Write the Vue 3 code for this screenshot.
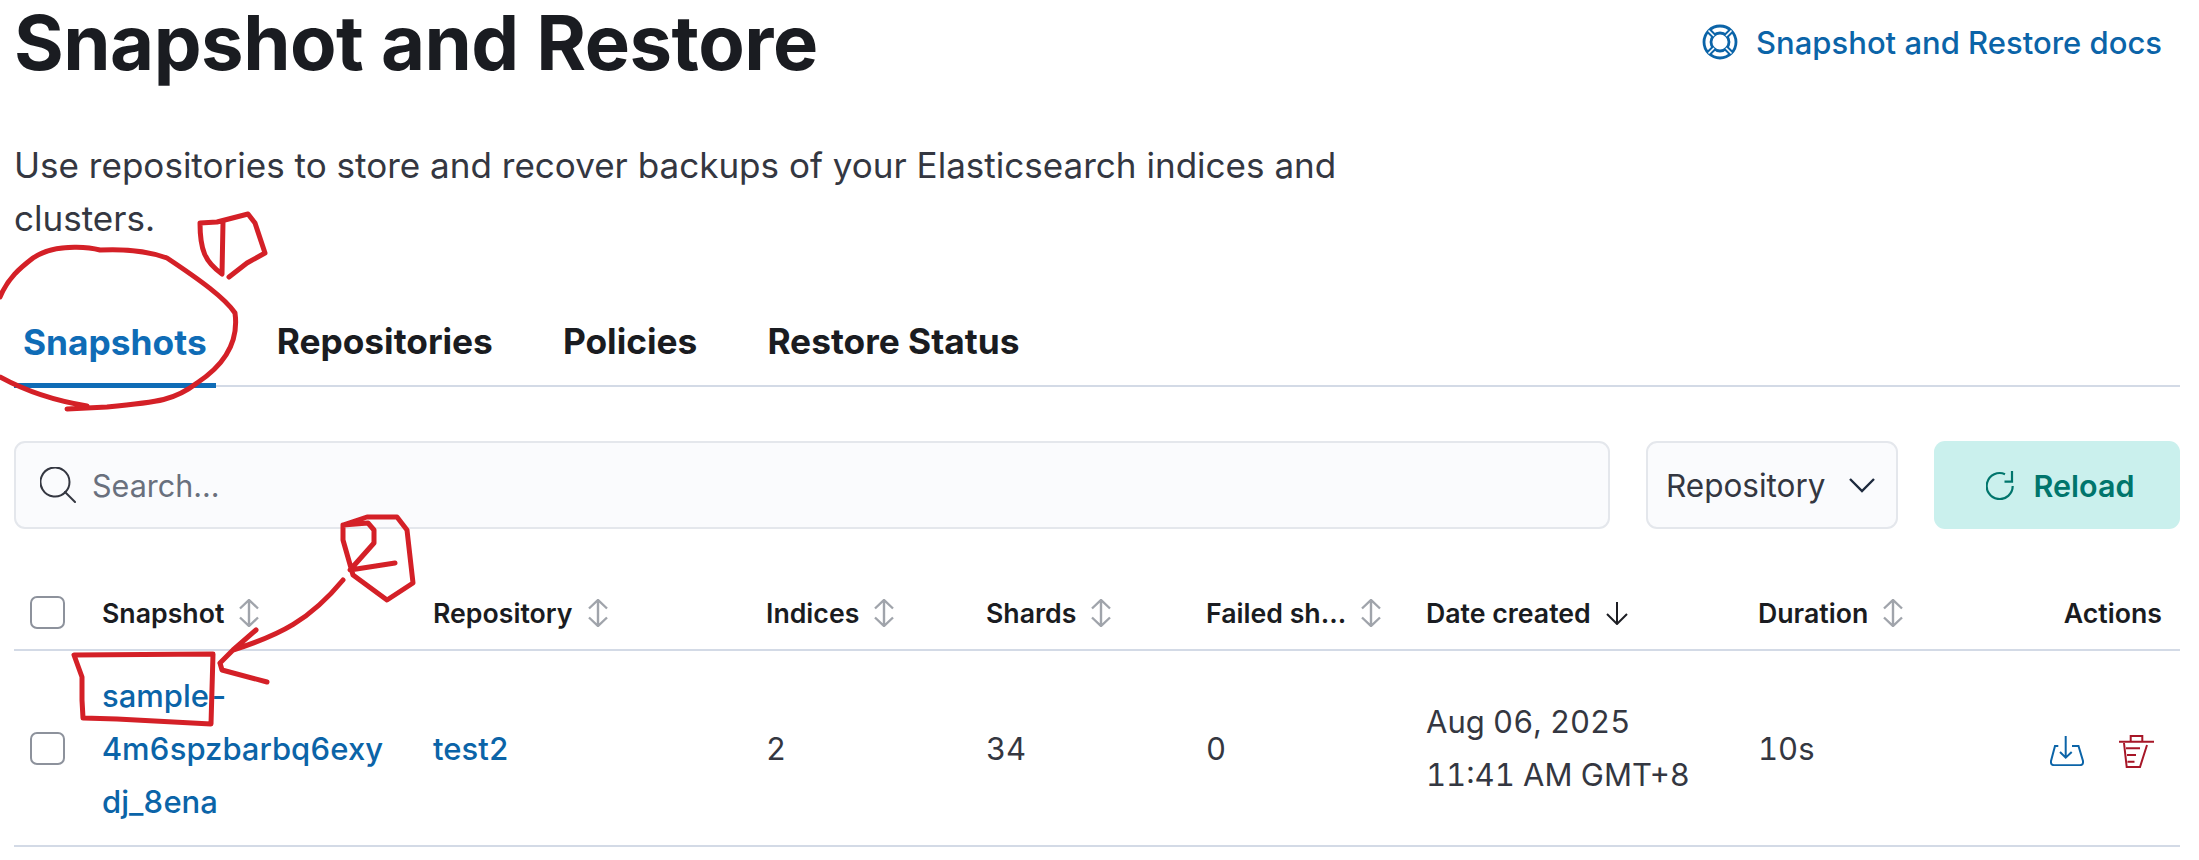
<script setup>
const columns = [
  { label: 'Snapshot', sort: true },
  { label: 'Repository', sort: true },
  { label: 'Indices', sort: true },
  { label: 'Shards', sort: true },
  { label: 'Failed sh...', sort: true },
  { label: 'Date created', sort: false, arrow: true },
  { label: 'Duration', sort: true },
]
</script>

<template>
  <div class="page">
    <header class="head">
      <h1 class="title">Snapshot and Restore</h1>
      <a class="docs">
        <svg class="docs-icon" viewBox="0 0 36 36" fill="none" stroke="currentColor" stroke-width="2.800">
          <circle cx="18" cy="18" r="16" />
          <circle cx="18" cy="18" r="9" />
          <path d="M6.500 6.500l5.500 5.500M29.500 6.500L24 12M6.500 29.500L12 24M29.500 29.500L24 24" stroke-width="5.500" />
          <path d="M6.500 6.500l5.500 5.500M29.500 6.500L24 12M6.500 29.500L12 24M29.500 29.500L24 24" stroke="#fff" stroke-width="1.600" />
        </svg>
        <span>Snapshot and Restore docs</span>
      </a>
    </header>

    <p class="desc">Use repositories to store and recover backups of your Elasticsearch indices and clusters.</p>

    <nav class="tabs">
      <a class="tab active">Snapshots</a>
      <a class="tab">Repositories</a>
      <a class="tab">Policies</a>
      <a class="tab">Restore Status</a>
    </nav>

    <div class="toolbar">
      <label class="search">
        <svg class="search-icon" viewBox="0 0 36 36" fill="none" stroke="#343741" stroke-width="2" stroke-linecap="round">
          <path d="M25.500 25A14.500 14.500 0 1 1 29.500 15C29.500 19 28 22.500 25.500 25Z" />
          <path d="M25 25l10 10" />
        </svg>
        <span class="placeholder">Search...</span>
      </label>
      <button class="select">
        <span>Repository</span>
        <svg class="chev" viewBox="0 0 28 16" fill="none" stroke="#1d2a3e" stroke-width="2.400"><path d="M2 2l12 12L26 2" /></svg>
      </button>
      <button class="reload">
        <svg class="reload-icon" viewBox="0 0 28 29" fill="none" stroke="#00756c" stroke-width="2.200">
          <path d="M19 3.200A13 13 0 1 0 26.700 15" />
          <path d="M26 0v10.700h-7.500" />
        </svg>
        <span>Reload</span>
      </button>
    </div>

    <table class="table">
      <colgroup>
        <col class="c0" /><col class="c1" /><col class="c2" /><col class="c3" />
        <col class="c4" /><col class="c5" /><col class="c6" /><col class="c7" /><col class="c8" />
      </colgroup>
      <thead>
        <tr>
          <th class="check-cell"><span class="checkbox"></span></th>
          <th v-for="c in columns" :key="c.label">
            <span class="th-inner">
              {{ c.label }}
              <svg v-if="c.sort" class="sort" viewBox="0 0 22 28" fill="none" stroke="#a0a4ab" stroke-width="2.400">
                <path d="M2 9.500l9-8.500 9 8.500M2 18.500l9 8.500 9-8.500M11 1v26" />
              </svg>
              <svg v-if="c.arrow" class="arrow" viewBox="0 0 24 24" fill="none" stroke="#1d1e24" stroke-width="2">
                <path d="M12 1v22M2 13l10 10 10-10" />
              </svg>
            </span>
          </th>
          <th class="actions-head">Actions</th>
        </tr>
      </thead>
      <tbody>
        <tr>
          <td class="check-cell"><span class="checkbox"></span></td>
          <td class="link">sample-<br />4m6spzbarbq6exy<br />dj_8ena</td>
          <td class="link">test2</td>
          <td>2</td>
          <td>34</td>
          <td>0</td>
          <td>Aug 06, 2025<br />11:41 AM GMT+8</td>
          <td>10s</td>
          <td class="actions">
            <svg class="act" viewBox="0 0 34 30" fill="none" stroke="#0b64a8" stroke-width="2">
              <path d="M8.300 10H5L1 25Q0.500 29 4 29.200H30Q33.500 29 33 25L28.500 10H22" />
              <path d="M15.700 0v21.700M10 16l5.700 5.700L21.700 16" />
            </svg>
            <svg class="trash" viewBox="0 0 35 33" fill="none" stroke="#a71627" stroke-width="2">
              <path d="M0 6.700h35M11.700 6.700V1h11.600v5.700M5 8l2.700 24H21L28 10M7 13.300h14M8 20h9M8.500 26.700h7" />
            </svg>
          </td>
        </tr>
      </tbody>
    </table>

    <svg class="marks" viewBox="0 0 2199 860" fill="none" stroke="#d42027" stroke-width="5" stroke-linecap="round" stroke-linejoin="round">
      <path d="M0 297C8 278 20 268 33 258C60 240 100 250 100 250C120 249 145 250 167 258C200 280 225 298 235 313C238 335 232 360 197 383C175 400 160 402 107 407L67 409M0 377C20 388 50 400 87 406" />
      <path d="M200 223C200 250 205 262 222 274L223 222M200 223L217 222L248 214L255 223L265 253L247 263L229 277" />
      <path d="M74 655L213 654L211 724L117 719L83 718L82 700L82 677L74 655Z" />
      <path d="M343 580C310 620 280 635 233 650L220 663M256 630L233 650L220 663L222 670L267 682" />
      <path d="M343 525L367 517L397 517L407 530L413 583L387 600L353 575L343 540ZM343 525L368 523L374 530L374 543L350 570L395 563" />
    </svg>
  </div>
</template>

<style>
html, body { margin: 0; background: #fff; overflow: hidden; }
</style>

<style scoped>
.page {
  position: relative;
  width: 2199px;
  height: 860px;
  overflow: hidden;
  box-sizing: border-box;
  padding: 0 19px 0 14px;
  font-family: Inter, "Liberation Sans", sans-serif;
  color: #343741;
}
.head { display: flex; justify-content: space-between; align-items: center; height: 84px; }
.title { margin: 0; font-size: 76px; font-weight: 700; line-height: 90px; color: #1a1c21; letter-spacing: -0.5px; }
.docs { display: flex; align-items: center; gap: 18px; color: #0b64a8; font-size: 31px; font-weight: 500; margin-right: 18px; }
.docs-icon { width: 36px; height: 36px; }
.desc { margin: 55px 0 0; width: 1400px; font-size: 35.050px; line-height: 53px; color: #343741; }
.tabs { display: flex; height: 90px; margin-top: 50px; border-bottom: 2px solid #d3dae6; align-items: stretch; }
.tab { padding: 0 9px; margin-right: 52px; font-size: 35.300px; font-weight: 700; color: #1a1c21; display: flex; align-items: center; position: relative; top: 1px; }
.tab.active { color: #0f6cb6; box-shadow: inset 0 -5px 0 #0f6cb6; margin-bottom: -2px; }
.toolbar { display: flex; gap: 36px; margin-top: 54px; height: 88px; }
.search { flex: 1; display: flex; align-items: center; gap: 16px; padding-left: 24px; background: #fafbfd; border: 2px solid #e4e7ec; border-radius: 11px; }
.search-icon { width: 36px; height: 36px; }
.placeholder { font-size: 30.500px; color: #69707d; }
.select { width: 252px; display: flex; align-items: center; justify-content: space-between; padding: 0 20px 0 18px; box-sizing: border-box; background: #fafbfd; border: 2px solid #e4e7ec; border-radius: 11px; font: inherit; font-size: 31.500px; color: #343741; }
.chev { width: 28px; height: 16px; }
.reload { width: 246px; display: flex; align-items: center; justify-content: center; gap: 20px; padding-left: 12px; background: #caf0ed; border: 0; border-radius: 11px; font: inherit; font-size: 30.500px; font-weight: 600; color: #00756c; }
.reload-icon { width: 28px; height: 29px; }
.table { width: 2166px; margin-top: 38px; border-collapse: collapse; table-layout: fixed; }
.c0 { width: 74px; } .c1 { width: 331px; } .c2 { width: 333px; } .c3 { width: 220px; }
.c4 { width: 220px; } .c5 { width: 220px; } .c6 { width: 332px; } .c7 { width: 220px; } .c8 { width: 216px; }
th { height: 83px; padding: 0 14px 20px; vertical-align: bottom; font-size: 26.700px; font-weight: 600; color: #1a1c21; text-align: left; border-bottom: 2px solid #d3dae6; white-space: nowrap; box-sizing: border-box; }
.th-inner { display: inline-flex; align-items: center; gap: 14px; }
.sort { width: 22px; height: 28px; }
.arrow { width: 24px; height: 24px; }
th.actions-head { text-align: right; padding-right: 18px; }
td { height: 196px; padding: 0 14px; font-size: 31px; line-height: 53px; color: #343741; border-bottom: 2px solid #d3dae6; box-sizing: border-box; font-variant-numeric: tabular-nums; }
.link { color: #0b64a8; font-weight: 500; }
th.check-cell, td.check-cell { padding-left: 16px; padding-right: 0; }
.checkbox { display: block; width: 35px; height: 33px; border: 2px solid #8d929c; border-radius: 7px; box-sizing: border-box; }
td.actions { text-align: right; padding-right: 26px; }
.act { width: 34px; height: 30px; vertical-align: middle; }
.trash { width: 35px; height: 33px; margin-left: 35px; vertical-align: middle; }
.marks { position: absolute; left: 0; top: 0; width: 2199px; height: 860px; pointer-events: none; }
</style>
